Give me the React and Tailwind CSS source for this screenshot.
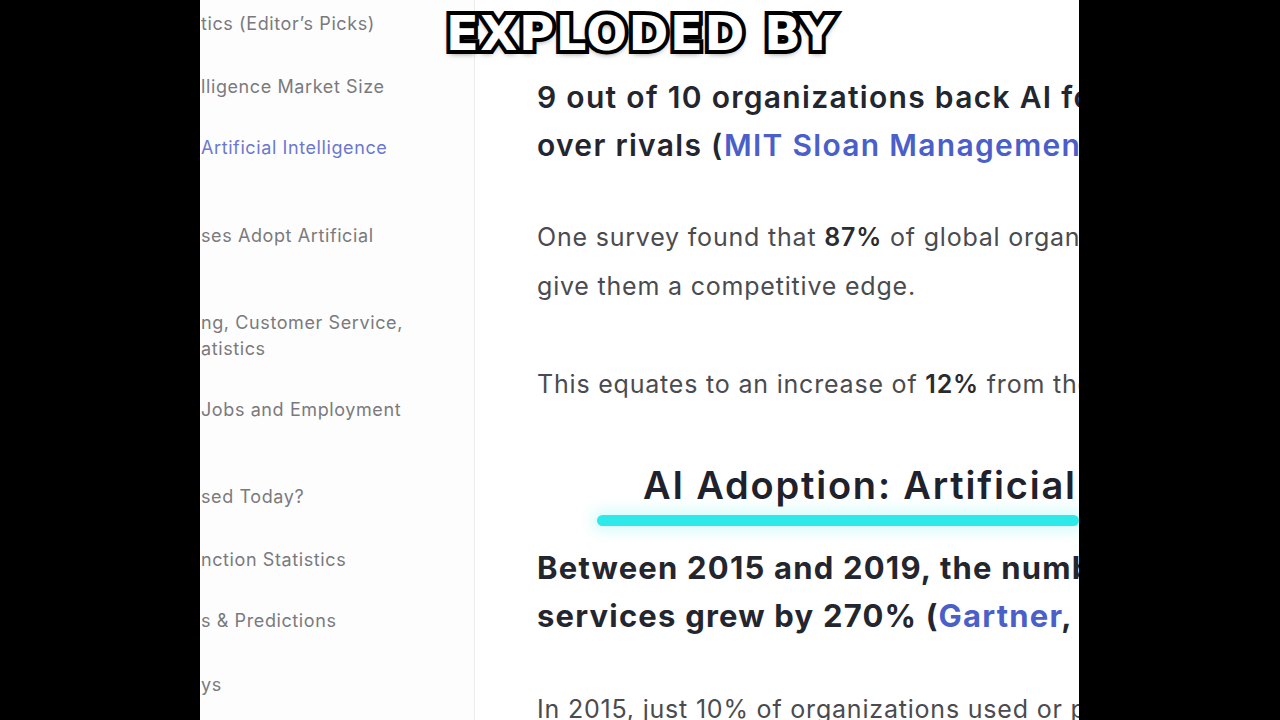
import React from "react";

const sideItems = [
  { text: "tics (Editor’s Picks)", top: "mt-[11px]" },
  { text: "lligence Market Size", top: "mt-[37px]" },
  { text: "Artificial Intelligence", top: "mt-[35px]", active: true },
  { text: "ses Adopt Artificial", top: "mt-[62px]" },
  { text: "ng, Customer Service,", second: "atistics", top: "mt-[61px]" },
  { text: "Jobs and Employment", top: "mt-[35px]" },
  { text: "sed Today?", top: "mt-[61px]" },
  { text: "nction Statistics", top: "mt-[37px]" },
  { text: "s & Predictions", top: "mt-[35px]" },
  { text: "ys", top: "mt-[38px]" },
];

export default function App() {
  return (
    <div className="relative flex w-[1280px] h-[720px] bg-black overflow-hidden font-['Inter',sans-serif]">
      <div className="w-[200px] shrink-0" />

      {/* sidebar - table of contents */}
      <aside className="w-[275px] shrink-0 h-full bg-[#fdfdfd] border-r border-[#ececee] overflow-hidden">
        {sideItems.map((item, i) => (
          <div
            key={i}
            className={`${item.top} pl-[1px] text-[18px] leading-[26px] whitespace-nowrap tracking-[0.6px] ${
              item.active ? "text-[#6b78cf]" : "text-[#7a7a7e]"
            }`}
          >
            <div>{item.text}</div>
            {item.second && <div>{item.second}</div>}
          </div>
        ))}
      </aside>

      {/* article */}
      <main className="w-[604px] shrink-0 h-full bg-white overflow-hidden">
        <div className="pl-[62px] whitespace-nowrap">
          <div className="mt-[73px] text-[30px] leading-[48px] font-semibold text-[#24262f] tracking-[1.3px]">
            <div>9 out of 10 organizations back AI for</div>
            <div>
              over rivals (<span className="text-[#4b5fc9]">MIT Sloan Management</span>
            </div>
          </div>

          <div className="mt-[44px] text-[25px] leading-[49px] text-[#4b4b4f] tracking-[0.8px]">
            <div>
              One survey found that <b className="font-semibold text-[#2a2b30]">87%</b> of global organizations
            </div>
            <div>give them a competitive edge.</div>
          </div>

          <div className="mt-[49px] text-[25px] leading-[49px] text-[#4b4b4f] tracking-[0.8px]">
            This equates to an increase of <b className="font-semibold text-[#2a2b30]">12%</b> from the
          </div>

          <div className="mt-[51px] pl-[106px] text-[38px] leading-[50px] font-semibold text-[#1f222c] tracking-[1.8px]">
            AI Adoption: Artificial Intelligence
          </div>
          <div className="mt-[5px] ml-[60px] h-[11px] rounded-full bg-[#2ee9ea] shadow-[0_0_14px_6px_rgba(46,233,234,0.18)]" />

          <div className="mt-[18px] text-[31px] leading-[48px] font-bold text-[#24262f] tracking-[1.2px]">
            <div>Between 2015 and 2019, the number</div>
            <div>
              services grew by 270% (<span className="text-[#4b5fc9]">Gartner</span>, <span className="text-[#4b5fc9]">IDC</span>)
            </div>
          </div>

          <div className="mt-[45px] text-[25px] leading-[49px] text-[#4b4b4f] tracking-[0.8px]">
            In 2015, just 10% of organizations used or planned
          </div>
        </div>
      </main>

      <div className="flex-1" />

      {/* video caption overlay */}
      <div className="absolute left-0 right-0 top-[3px] flex justify-center pointer-events-none">
        <div className="ml-[2px] text-[48px] leading-[60px] font-black text-white tracking-[1.6px] font-['DejaVu_Sans',sans-serif] [-webkit-text-stroke:8px_#000] [paint-order:stroke_fill] [text-shadow:0_3px_6px_rgba(0,0,0,0.6)]">
          EXPLODED BY
        </div>
      </div>
    </div>
  );
}
